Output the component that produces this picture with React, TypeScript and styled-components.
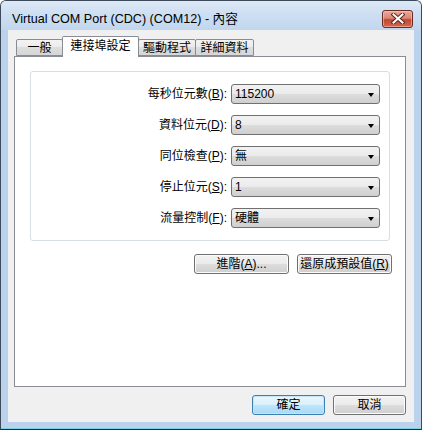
import React from "react";
import styled, { createGlobalStyle } from "styled-components";

const GlobalStyle = createGlobalStyle`
  html, body { margin: 0; padding: 0; background: #ffffff; }
  body { font-family: "Liberation Sans", "Noto Sans CJK TC", sans-serif; font-size: 12px; color: #000; }
  * { box-sizing: border-box; }
`;

const Window = styled.div`
  width: 422px;
  height: 430px;
  border: 1px solid #3d4a59;
  border-radius: 6px 6px 0 0;
  background: #bad2eb;
  display: flex;
  flex-direction: column;
  overflow: hidden;
  border-bottom-color: #1f2b36;
  box-shadow: inset 0 -1px 0 #7fd0e6;
`;

const TitleBar = styled.div`
  height: 29px;
  flex: none;
  display: flex;
  align-items: center;
  padding: 0 8px 0 11px;
  background: linear-gradient(#dde9f6 0%, #cddff2 45%, #c1d6ee 100%);
`;

const Title = styled.div`
  flex: 1;
  font-family: "Liberation Sans", "Noto Sans CJK TC", sans-serif;
  font-size: 12.6px;
  color: #000;
  padding-top: 3px;
  white-space: nowrap;
`;

const CloseButton = styled.div`
  width: 31px;
  height: 18px;
  margin-top: 6px;
  border: 1px solid #6b2b22;
  border-radius: 3px;
  background: linear-gradient(#e9a99b 0%, #d98674 45%, #c4452e 55%, #cf6a52 100%);
  box-shadow: inset 0 0 0 1px rgba(255, 210, 200, 0.5);
  display: flex;
  align-items: center;
  justify-content: center;
`;

const Client = styled.div`
  flex: 1;
  margin: 0 7px 7px 7px;
  background: #f0f0f0;
  display: flex;
  flex-direction: column;
  padding: 6px 8px 7px 6px;
`;

const TabStrip = styled.div`
  height: 20px;
  display: flex;
  align-items: flex-end;
  padding-left: 2px;
  position: relative;
  z-index: 1;
`;

const Tab = styled.div<{ $active?: boolean; $width: number }>`
  width: ${(p) => p.$width}px;
  height: ${(p) => (p.$active ? 21 : 17)}px;
  margin-bottom: ${(p) => (p.$active ? -1 : 0)}px;
  margin-left: -1px;
  border: 1px solid #898c95;
  border-bottom: ${(p) => (p.$active ? "none" : "1px solid #898c95")};
  border-radius: 2px 2px 0 0;
  background: ${(p) =>
    p.$active ? "#ffffff" : "linear-gradient(#f3f3f3 0%, #ebebeb 50%, #dddddd 50%, #d6d6d6 100%)"};
  display: flex;
  align-items: center;
  justify-content: center;
  font-size: 12px;
  line-height: 1;
  padding-top: ${(p) => (p.$active ? 0 : 1)}px;
  padding-bottom: ${(p) => (p.$active ? 2 : 0)}px;
  &:first-child { margin-left: 0; }
`;

const Panel = styled.div`
  flex: 1;
  background: #ffffff;
  border: 1px solid #898c95;
  padding: 14px 15px;
  display: flex;
  flex-direction: column;
`;

const Group = styled.div`
  border: 1px solid #d5dfe5;
  border-radius: 3px;
  padding: 12px 9px 12px 9px;
  display: flex;
  flex-direction: column;
  gap: 11px;
`;

const Row = styled.div`
  display: flex;
  align-items: center;
  justify-content: flex-end;
  gap: 4px;
  height: 20px;
`;

const Label = styled.label`
  font-size: 12px;
  white-space: nowrap;
  line-height: 1;
`;

const Combo = styled.div`
  width: 149px;
  height: 20px;
  border: 1px solid #707070;
  border-radius: 3px;
  background: linear-gradient(#f2f2f2 0%, #ebebeb 50%, #dddddd 50%, #cfcfcf 100%);
  display: flex;
  align-items: center;
  padding: 0 4px 0 3px;
  font-size: 12px;
  line-height: 1;
`;

const ComboValue = styled.span`
  flex: 1;
`;

const Arrow = styled.span`
  width: 0;
  height: 0;
  border-left: 3.5px solid transparent;
  border-right: 3.5px solid transparent;
  border-top: 4px solid #000;
  margin-right: 1px;
  margin-top: 1px;
`;

const ButtonRow = styled.div<{ $gap: number; $top: number }>`
  display: flex;
  justify-content: flex-end;
  gap: ${(p) => p.$gap}px;
  margin-top: ${(p) => p.$top}px;
`;

const PanelButtons = styled(ButtonRow)`
  margin-right: -2px;
`;

const Button = styled.div<{ $width: number; $default?: boolean }>`
  width: ${(p) => p.$width}px;
  height: 20px;
  border: 1px solid ${(p) => (p.$default ? "#3c7fb1" : "#707070")};
  border-radius: 3px;
  background: ${(p) =>
    p.$default
      ? "linear-gradient(#eaf6fd 0%, #d9f0fc 50%, #bee6fd 50%, #a7d9f5 100%)"
      : "linear-gradient(#f2f2f2 0%, #ebebeb 50%, #dddddd 50%, #cfcfcf 100%)"};
  box-shadow: inset 0 0 0 1px ${(p) => (p.$default ? "#c6e6f8" : "#fcfcfc")};
  display: flex;
  align-items: center;
  justify-content: center;
  font-size: 12px;
  line-height: 1;
`;

const U = styled.span`
  text-decoration: underline;
`;

const tabs: { label: string; width: number; active?: boolean }[] = [
  { label: "一般", width: 47 },
  { label: "連接埠設定", width: 77, active: true },
  { label: "驅動程式", width: 58 },
  { label: "詳細資料", width: 59 },
];

const rows: { label: string; key: string; value: string }[] = [
  { label: "每秒位元數", key: "B", value: "115200" },
  { label: "資料位元", key: "D", value: "8" },
  { label: "同位檢查", key: "P", value: "無" },
  { label: "停止位元", key: "S", value: "1" },
  { label: "流量控制", key: "F", value: "硬體" },
];

const CloseIcon = () => (
  <svg width="14" height="11" viewBox="0 0 14 11">
    <path d="M2.5 1.5 L11.5 9.5 M11.5 1.5 L2.5 9.5" stroke="#5a2a22" strokeWidth="4" strokeLinecap="square" fill="none" />
    <path d="M2.5 1.5 L11.5 9.5 M11.5 1.5 L2.5 9.5" stroke="#ffffff" strokeWidth="2" strokeLinecap="square" fill="none" />
  </svg>
);

export default function App() {
  return (
    <>
      <GlobalStyle />
      <Window>
        <TitleBar>
          <Title>Virtual COM Port (CDC) (COM12) - 內容</Title>
          <CloseButton>
            <CloseIcon />
          </CloseButton>
        </TitleBar>
        <Client>
          <TabStrip>
            {tabs.map((t) => (
              <Tab key={t.label} $width={t.width} $active={t.active}>
                {t.label}
              </Tab>
            ))}
          </TabStrip>
          <Panel>
            <Group>
              {rows.map((r) => (
                <Row key={r.key}>
                  <Label>
                    {r.label}(<U>{r.key}</U>):
                  </Label>
                  <Combo>
                    <ComboValue>{r.value}</ComboValue>
                    <Arrow />
                  </Combo>
                </Row>
              ))}
            </Group>
            <PanelButtons $gap={8} $top={13}>
              <Button $width={95}>
                進階(<U>A</U>)...
              </Button>
              <Button $width={95}>
                還原成預設值(<U>R</U>)
              </Button>
            </PanelButtons>
          </Panel>
          <ButtonRow $gap={8} $top={8}>
            <Button $width={73} $default>
              確定
            </Button>
            <Button $width={73}>取消</Button>
          </ButtonRow>
        </Client>
      </Window>
    </>
  );
}
